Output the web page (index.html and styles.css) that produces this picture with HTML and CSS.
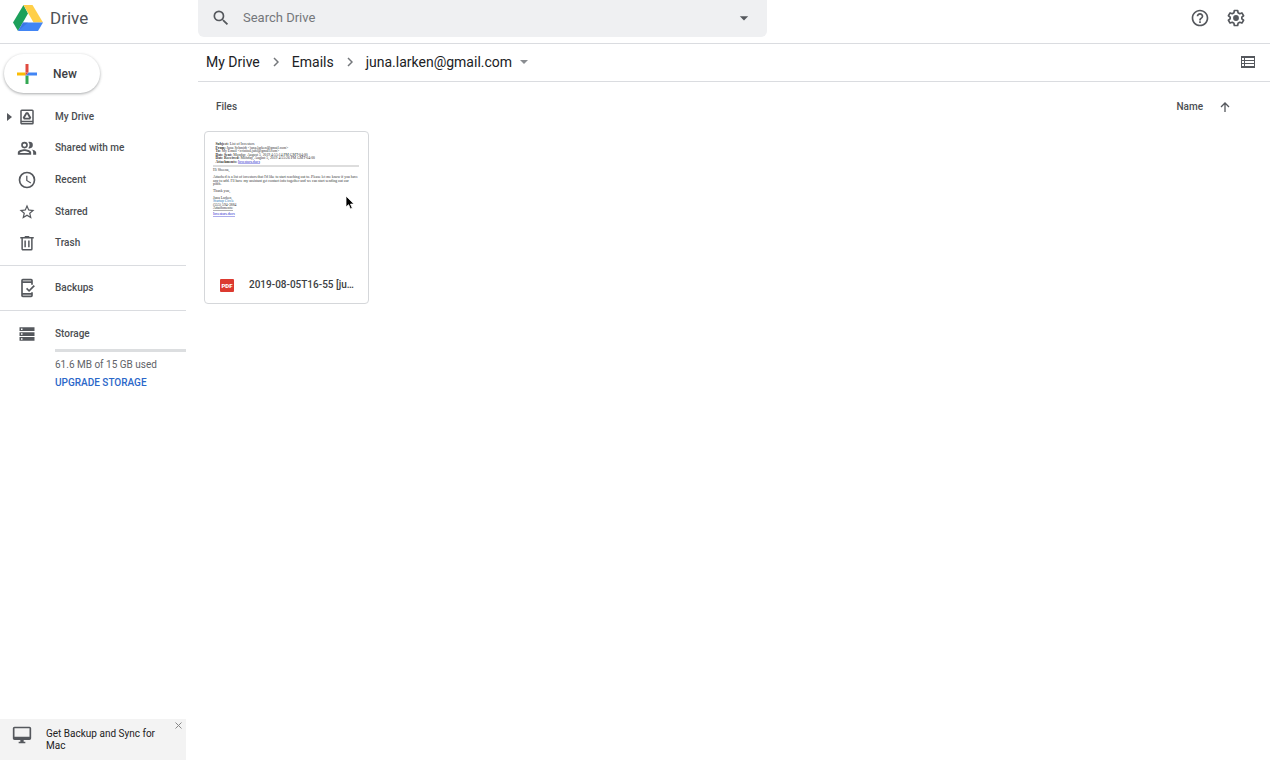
FILE: index.html
```
<!DOCTYPE html>
<html lang="en">
<head>
    <meta charset="UTF-8">
    <title>Drive</title>
    <link rel="stylesheet" href="styles.css">
</head>
<body>
<header id="header">
    <a class="logo" href="#">
        <svg width="30" height="26" viewBox="0 0 30 26">
            <path fill="#1da05b" d="M10.5 0 15 8.5 5 26 0 17.500z"/>
            <path fill="#ffcf48" d="M10.500 0H19.500L30 17.500H20.500z"/>
            <path fill="#4285f4" d="M10 17.500H30L25 26H5z"/>
            <path fill="#3367d6" d="M5 26 10 17.500 15 17.500z" opacity=".5"/>
        </svg>
        <span>Drive</span>
    </a>
    <form class="search">
        <button type="button" aria-label="Search">
            <svg width="20" height="20" viewBox="0 0 24 24"><path d="M15.500 14h-.79l-.28-.27A6.470 6.470 0 0 0 16 9.500 6.500 6.500 0 1 0 9.500 16c1.610 0 3.090-.59 4.230-1.570l.27.28v.79l5 4.990L20.490 19l-4.990-5zm-6 0C7.010 14 5 11.990 5 9.500S7.010 5 9.500 5 14 7.010 14 9.500 11.990 14 9.500 14z"/></svg>
        </button>
        <input type="text" placeholder="Search Drive" aria-label="Search Drive">
        <button type="button" aria-label="Search options">
            <svg width="20" height="20" viewBox="0 0 24 24"><path d="M7 10l5 5 5-5z"/></svg>
        </button>
    </form>
    <div class="tools">
        <button type="button" aria-label="Help">
            <svg width="20" height="20" viewBox="0 0 24 24"><path d="M11 18h2v-2h-2v2zm1-16C6.480 2 2 6.480 2 12s4.480 10 10 10 10-4.480 10-10S17.520 2 12 2zm0 18c-4.410 0-8-3.590-8-8s3.590-8 8-8 8 3.590 8 8-3.590 8-8 8zm0-14c-2.210 0-4 1.790-4 4h2c0-1.100.9-2 2-2s2 .9 2 2c0 2-3 1.750-3 5h2c0-2.250 3-2.500 3-5 0-2.210-1.790-4-4-4z"/></svg>
        </button>
        <button type="button" aria-label="Settings">
            <svg width="20" height="20" viewBox="0 0 24 24">
                <path fill="none" stroke="#55585d" stroke-width="2" stroke-linejoin="round" d="M10 3h4l.5 2.700 2 1.200 2.600-1 2 3.400-2.100 1.700v2l2.100 1.700-2 3.400-2.600-1-2 1.200L14 21h-4l-.5-2.700-2-1.200-2.600 1-2-3.400L5 13v-2L2.900 9.300l2-3.400 2.600 1 2-1.200z"/>
                <circle cx="12" cy="12" r="3.500"/>
            </svg>
        </button>
    </div>
</header>
<div id="page">
    <aside id="side">
        <button class="new" type="button">
            <svg width="20" height="20" viewBox="0 0 20 20">
                <path fill="#e04a3f" d="M8.500 0h3v8.500h-3z"/>
                <path fill="#fbbc05" d="M0 8.500h8.500v3H0z"/>
                <path fill="#34a853" d="M8.500 11.500h3V20h-3z"/>
                <path fill="#4285f4" d="M11.500 8.500H20v3H8.500z"/>
                <path fill="#e04a3f" d="M8.500 8.500h3l-3 3z"/>
            </svg>
            <span>New</span>
        </button>
        <nav class="menu">
            <a href="#">
                <svg class="open" width="5" height="8" viewBox="0 0 5 8"><path d="M0 0l5 4-5 4z"/></svg>
                <svg width="18" height="18" viewBox="0 0 24 24">
                    <path d="M19 2H5a2 2 0 0 0-2 2v16c0 1.100.9 2 2 2h14a2 2 0 0 0 2-2V4a2 2 0 0 0-2-2zm0 18H5v-1h14v1zm0-3H5V4h14v13z"/>
                    <path d="M10.600 5.500h2.900l4.200 7.200-1.500 2.600H7.800l-1.500-2.600zm1.400 2.600-2.800 4.800h5.600z" fill-rule="evenodd"/>
                </svg>
                <span>My Drive</span>
            </a>
            <a href="#">
                <svg width="20" height="20" viewBox="0 0 24 24"><path d="M9 12.500a4 4 0 1 0 0-8 4 4 0 0 0 0 8zm0-6a2 2 0 1 1 0 4 2 2 0 0 1 0-4zM9 13.500c-2.700 0-8 1.300-8 4V20h16v-2.500c0-2.700-5.300-4-8-4zM3.200 18c.6-1.100 3.300-2.400 5.800-2.400s5.300 1.300 5.800 2.400zM15 12.500a4 4 0 0 0 0-8c-.5 0-1 .1-1.400.3a6 6 0 0 1 0 7.400c.4.2.9.3 1.400.3zM17.500 13.900c1.200.9 1.900 2.100 1.900 3.600V20H23v-2.500c0-1.900-2.700-3.100-5.500-3.600z"/></svg>
                <span>Shared with me</span>
            </a>
            <a href="#">
                <svg width="20" height="20" viewBox="0 0 24 24"><path d="M12 2a10 10 0 1 0 0 20 10 10 0 0 0 0-20zm0 18a8 8 0 1 1 0-16 8 8 0 0 1 0 16zm.5-13H11v6l5.200 3.100.8-1.200-4.500-2.700z"/></svg>
                <span>Recent</span>
            </a>
            <a href="#">
                <svg width="18" height="18" viewBox="0 0 24 24"><path d="M22 9.240l-7.190-.62L12 2 9.190 8.630 2 9.240l5.460 4.730L5.820 21 12 17.270 18.180 21l-1.630-7.030L22 9.240zM12 15.400l-3.760 2.270 1-4.280-3.320-2.880 4.380-.38L12 6.100l1.710 4.040 4.380.38-3.320 2.880 1 4.280L12 15.400z"/></svg>
                <span>Starred</span>
            </a>
            <a href="#">
                <svg width="18" height="18" viewBox="0 0 24 24"><path d="M15.500 4l-1-1.500h-5L8.500 4H3v2h1.500v14c0 1.100.9 2 2 2h11a2 2 0 0 0 2-2V6H21V4zm2 16h-11V6h11zM8.500 8.500h2v9h-2zm5 0h2v9h-2z"/></svg>
                <span>Trash</span>
            </a>
        </nav>
        <nav class="backups">
            <a href="#">
                <svg width="20" height="20" viewBox="0 0 24 24"><path d="M17 17v1H7V6h10v2h2V3a2 2 0 0 0-2-2H7a2 2 0 0 0-2 2v18c0 1.100.9 2 2 2h10a2 2 0 0 0 2-2v-4zM7 3h10v1H7zm10 18H7v-1h10zM20 8.500l-5.500 5.600-2.300-2.300-1.400 1.400 3.700 3.700 7-7z"/></svg>
                <span>Backups</span>
            </a>
        </nav>
        <section class="storage">
            <a href="#">
                <svg width="18" height="18" viewBox="0 0 24 24"><path fill-rule="evenodd" d="M2 3h20v5H2zm2 1.500v2h2v-2zM2 9.500h20v5H2zM4 11v2h2v-2zM2 16h20v5H2zm2 1.500v2h2v-2z"/></svg>
                <span>Storage</span>
            </a>
            <div class="bar"></div>
            <p>61.6 MB of 15 GB used</p>
            <a class="upgrade" href="#">UPGRADE STORAGE</a>
        </section>
        <div class="promo">
            <svg width="20" height="20" viewBox="0 0 24 24"><path d="M21 2H3a2 2 0 0 0-2 2v12c0 1.100.9 2 2 2h7v2H8v2h8v-2h-2v-2h7a2 2 0 0 0 2-2V4a2 2 0 0 0-2-2zm0 12H3V4h18z"/></svg>
            <a href="#">Get Backup and Sync for Mac</a>
            <button type="button" aria-label="Close">
                <svg width="7" height="7" viewBox="0 0 7 7"><path d="M.5.5l6 6M6.500.5l-6 6" stroke="#888" fill="none"/></svg>
            </button>
        </div>
    </aside>
    <main id="main">
        <div class="path">
            <a href="#">My Drive</a>
            <svg width="6" height="10" viewBox="0 0 6 10"><path d="M1 1l4 4-4 4"/></svg>
            <a href="#">Emails</a>
            <svg width="6" height="10" viewBox="0 0 6 10"><path d="M1 1l4 4-4 4"/></svg>
            <a class="current" href="#">juna.larken@gmail.com
                <svg width="8" height="4" viewBox="0 0 8 4"><path d="M0 0h8L4 4z"/></svg>
            </a>
            <button type="button" aria-label="List view">
                <svg width="14" height="12" viewBox="0 0 14 12"><path fill-rule="evenodd" d="M0 0h14v12H0zm1 2v2h2V2zm3 0v2h9V2zM1 5v2h2V5zm3 0v2h9V5zM1 8v2h2V8zm3 0v2h9V8z"/></svg>
            </button>
        </div>
        <div class="title">
            <h2>Files</h2>
            <button type="button">
                <span>Name</span>
                <svg width="10" height="10" viewBox="0 0 10 10"><path d="M5 10V1M1 5l4-4 4 4" fill="none" stroke="#55585d" stroke-width="1.300"/></svg>
            </button>
        </div>
        <a class="file" href="#">
            <svg class="thumb" viewBox="0 0 652 532">
                <text x="42" y="52"><tspan class="b">Subject:</tspan> List of Investors</text>
                <text x="42" y="66"><tspan class="b">From:</tspan> Juna Schmidt &lt;juna.larken@gmail.com&gt;</text>
                <text x="42" y="80"><tspan class="b">To:</tspan> My Email &lt;cristina.juhl@gmail.com&gt;</text>
                <text x="42" y="94"><tspan class="b">Date Sent:</tspan> Monday, August 5, 2019 4:55:14 PM GMT-04:00</text>
                <text x="42" y="108"><tspan class="b">Date Received:</tspan> Monday, August 5, 2019 4:55:26 PM GMT-04:00</text>
                <text x="42" y="122"><tspan class="b">Attachments:</tspan> <tspan class="link">Investors.docx</tspan></text>
                <path d="M32 134h584v4H32z" fill="#bbb"/>
                <text x="32" y="156">Hi Sheena,</text>
                <text x="32" y="184">Attached is a list of investors that I'd like to start reaching out to. Please let me know if you have</text>
                <text x="32" y="198">any to add. I'll have my assistant get contact info together and we can start sending out our</text>
                <text x="32" y="212">pitch.</text>
                <text x="32" y="238">Thank you,</text>
                <text x="32" y="266">Juna Larken</text>
                <text x="32" y="280" class="firm">Startup Circle</text>
                <text x="32" y="294">(555) 594-3884</text>
                <text x="32" y="308" class="line">Attachments:</text>
                <text x="32" y="332" class="link">Investors.docx</text>
            </svg>
            <div class="name">
                <span class="pdf">PDF</span>
                <span class="text">2019-08-05T16-55 [ju…</span>
            </div>
            <svg class="cursor" width="10" height="16" viewBox="0 0 10 16"><path d="M1 1v11l2.600-2.300L5.400 14l1.900-.8-1.800-4.100H9z" fill="#000" stroke="#fff" stroke-width=".8"/></svg>
        </a>
    </main>
</div>
</body>
</html>
```
FILE: styles.css
```
*{
    margin: 0;
    padding: 0;
    box-sizing: border-box;
}
body{
    min-height: 100vh;
    display: flex;
    flex-direction: column;
    background: #fff;
    color: #3c4043;
    font: 500 10px/14px Roboto, "Liberation Sans", sans-serif;
}
a{
    color: inherit;
    text-decoration: none;
}
button{
    border: 0;
    background: none;
    color: inherit;
    font: inherit;
    cursor: pointer;
}
svg{
    display: block;
    flex: none;
    fill: #55585d;
}
#header{
    height: 44px;
    display: flex;
    border-bottom: 1px solid #dadce0;
}
.logo{
    width: 198px;
    height: 36px;
    padding-left: 13px;
    display: flex;
    align-items: center;
    gap: 7px;
    color: #4d5156;
    font-size: 17px;
    font-weight: 400;
    line-height: 20px;
}
.search{
    width: 569px;
    height: 37px;
    padding: 0 13px 1px;
    display: flex;
    align-items: center;
    gap: 12px;
    background: #eff0f2;
    border-radius: 0 0 6px 6px;
}
.search input{
    flex: 1;
    min-width: 0;
    border: 0;
    outline: 0;
    background: none;
    font: 400 13px/20px Roboto, "Liberation Sans", sans-serif;
}
.search input::placeholder{
    color: #74777b;
}
.tools{
    height: 36px;
    margin-left: auto;
    padding-right: 24px;
    display: flex;
    align-items: center;
    gap: 16px;
}
#page{
    flex: 1;
    display: flex;
}
#side{
    width: 186px;
    margin-right: 12px;
    display: flex;
    flex-direction: column;
}
.new{
    width: 96px;
    height: 39px;
    margin: 10px 0 8px 4px;
    padding-left: 13px;
    display: flex;
    align-items: center;
    gap: 16px;
    border-radius: 20px;
    box-shadow: 0 1px 3px rgba(60,64,67,.45);
    font-size: 12px;
}
.menu{
    height: 158px;
    display: grid;
    grid-auto-rows: 1fr;
}
.menu a, .backups a, .storage a:first-child{
    display: grid;
    grid-template-columns: 54px 1fr;
    column-gap: 1px;
    align-items: center;
    position: relative;
    color: #4b4e52;
}
.menu a svg, .backups svg, .storage svg{
    justify-self: center;
}
.menu .open{
    position: absolute;
    left: 7px;
}
.backups{
    height: 46px;
    margin-top: 6px;
    display: grid;
    border-top: 1px solid #dadce0;
    border-bottom: 1px solid #dadce0;
}
.storage{
    padding-top: 14px;
}
.storage .bar{
    height: 3px;
    margin: 6px 0 6px 55px;
    background: #dcdee0;
}
.storage p{
    padding-left: 55px;
    margin-bottom: 4px;
    color: #5f6368;
    font-weight: 400;
}
.upgrade{
    padding-left: 55px;
    color: #2b67c9;
}
.promo{
    min-height: 41px;
    margin-top: auto;
    padding: 6px 4px 0 12px;
    display: flex;
    align-items: flex-start;
    gap: 14px;
    background: #f3f3f3;
    line-height: 12px;
}
.promo a{
    flex: 1;
    padding-top: 3px;
    font-weight: 400;
    color: #222;
}
.promo button{
    margin: -3px 0 0 -10px;
}
#main{
    flex: 1;
}
.path{
    height: 38px;
    padding: 0 15px 2px 8px;
    display: flex;
    align-items: center;
    gap: 13px;
    border-bottom: 1px solid #dadce0;
    color: #202124;
    font-size: 14px;
    font-weight: 400;
    line-height: 20px;
}
.path > svg{
    fill: none;
    stroke: #74777b;
    stroke-width: 1.5;
}
.path .current{
    display: flex;
    align-items: center;
    gap: 8px;
}
.current svg{
    fill: #8a8d91;
}
.path button{
    margin-left: auto;
}
.title{
    height: 49px;
    padding: 0 40px 0 18px;
    display: flex;
    align-items: center;
    justify-content: space-between;
    color: #4b4e52;
}
.title h2{
    font-size: 10px;
    font-weight: 500;
}
.title button{
    display: flex;
    align-items: center;
    gap: 17px;
}
.file{
    width: 165px;
    height: 173px;
    margin-left: 6px;
    display: flex;
    flex-direction: column;
    position: relative;
    border: 1px solid #d5d7da;
    border-radius: 4px;
}
.thumb{
    width: 163px;
    height: 133px;
    fill: #333;
    font: 400 15px "Liberation Serif", serif;
}
.thumb .b{
    font-weight: 700;
}
.thumb .link{
    fill: #22c;
    text-decoration: underline;
}
.thumb .firm{
    fill: #2a7ab8;
}
.thumb .line{
    text-decoration: underline;
}
.name{
    height: 38px;
    padding: 2px 8px 0 15px;
    display: flex;
    align-items: center;
    gap: 15px;
}
.pdf{
    width: 14px;
    height: 13px;
    flex: none;
    border-radius: 1px;
    background: #dc3a30;
    color: #fff;
    font-size: 6px;
    font-weight: 900;
    line-height: 13px;
    text-align: center;
}
.name .text{
    white-space: nowrap;
}
.cursor{
    position: absolute;
    left: 140px;
    top: 63px;
}
```
